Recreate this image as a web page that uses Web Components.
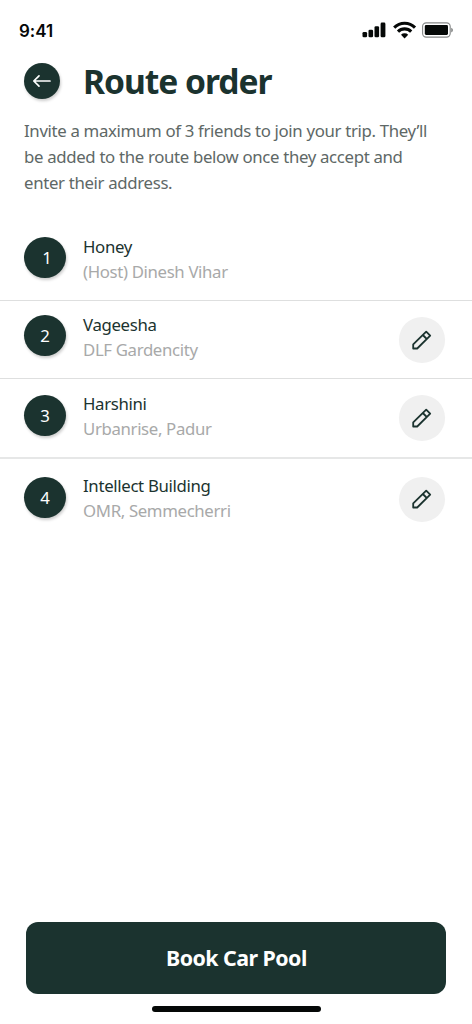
<!DOCTYPE html>
<html lang="en">
<head>
<meta charset="utf-8">
<title>Route order</title>
<style>
html,body{margin:0;height:100%;background:#fff}
body{font-family:"Noto Sans",sans-serif;color:#1b332f;overflow:hidden}
</style>
</head>
<body>
<route-screen></route-screen>
<script>
const define = (name, markup) => customElements.define(name, class extends HTMLElement {
  constructor() {
    super();
    const t = document.createElement('template');
    t.innerHTML = markup;
    this.attachShadow({mode: 'open'}).append(t.content.cloneNode(true));
  }
});

define('status-bar', `<style>
:host{display:flex;height:62px;box-sizing:border-box;padding:20px 19px 0 19px;justify-content:space-between;align-items:flex-start;color:#050807}
time{font:600 17px/21px Inter,sans-serif;letter-spacing:-.05px;margin-top:.6px}
svg{display:block;margin-top:1px}
</style>
<time>9:41</time>
<svg width="92" height="20" viewBox="361 21 92 20" fill="#050807">
<rect x="362.5" y="32" width="4.6" height="5.3" rx="1.3"/><rect x="368.5" y="29.8" width="4.6" height="7.5" rx="1.3"/><rect x="374.5" y="26.2" width="4.6" height="11.1" rx="1.3"/><rect x="380.6" y="22.6" width="4.8" height="14.7" rx="1.3"/>
<g fill="none" stroke="#050807" stroke-width="3.1"><path d="M394.2 27.6a14.7 14.7 0 0 1 20.8 0"/><path d="M398 31.6a9.3 9.3 0 0 1 13.2 0"/></g>
<path d="M401 34.7a5.2 5.2 0 0 1 7.2 0L404.6 38.4z"/>
<rect x="422.6" y="22.9" width="27.6" height="14.2" rx="3.6" fill="none" stroke="#858787" stroke-width="1.1"/>
<rect x="424.8" y="25.1" width="23.2" height="9.8" rx="1.3"/>
<path d="M451.2 27.8q1.8.7 1.8 2.3t-1.8 2.3z" fill="#858787"/>
</svg>`);

define('back-button', `<style>
:host{display:grid;place-items:center;width:36px;height:36px;border-radius:50%;background:#1b332f;box-shadow:1px 2px 3px #0003;margin-top:.5px}
svg{display:block}
</style>
<svg width="36" height="36" viewBox="0 0 36 36" fill="none" stroke="#fff" stroke-width="1.7" stroke-linecap="round" stroke-linejoin="round"><path d="M26 18H10M15 12.8L9.8 18L15 23.2"/></svg>`);

define('page-header', `<style>
:host{display:block;padding:0 24px}
.top{display:flex;gap:23px;align-items:flex-start;height:37px}
h1{margin:0;font-size:33.6px;line-height:38px;font-weight:700;letter-spacing:-1.02px;white-space:nowrap}
p{margin:19px 0 0;font-size:16.8px;line-height:25.9px;color:#5e6866;letter-spacing:-.33px;white-space:nowrap}
</style>
<div class="top"><back-button></back-button><h1><slot></slot></h1></div>
<p><slot name="intro"></slot></p>`);

define('stop-number', `<style>
:host{display:flex;justify-content:center;width:42px;height:41.2px;margin-top:.5px;border-radius:50%;background:#1b332f;color:#fff;box-shadow:1px 2px 3px #0003;font-size:16.8px;line-height:41px}
</style><span><slot></slot></span>`);

define('edit-button', `<style>
:host{display:grid;place-items:center;width:46.5px;height:45.5px;border-radius:50%;background:#f0f0f0}
svg{display:block}
</style>
<svg width="22" height="22" viewBox="0 0 22 22" fill="none" stroke="#1b332f" stroke-width="1.8" stroke-linejoin="round"><path d="M2.2 19.5V15.4L15.2 2.6L19.2 6.6L6.2 19.5zM11.8 6L15.8 10"/></svg>`);

define('route-stop', `<style>
:host{display:grid;grid-template-columns:42px 1fr 46.5px;column-gap:17px;align-items:start;box-sizing:border-box;padding:0 27px 0 24px}
.text{font-size:16.8px;line-height:25px;white-space:nowrap;margin-top:-3px}
.name{letter-spacing:-.33px}
.place{color:#a8a9a9;letter-spacing:-.35px}
.edit{margin-top:var(--edit-top,1px)}
</style>
<stop-number><slot name="number"></slot></stop-number>
<div class="text"><div class="name"><slot></slot></div><div class="place"><slot name="place"></slot></div></div>
<div class="edit"><slot name="action"></slot></div>`);

define('book-button', `<style>
:host{display:flex;justify-content:center;align-items:center;height:72px;border-radius:12px;background:#1b332f;color:#fff;font-size:21.4px;font-weight:700}
span{letter-spacing:-.55px;padding-bottom:2px}
</style><span><slot></slot></span>`);

define('home-indicator', `<style>
:host{display:block;width:169px;height:6px;border-radius:3px;background:#050807}
</style>`);

define('route-screen', `<style>
:host{display:flex;flex-direction:column;height:1024px;width:472px;background:#fff}
.list{display:flex;flex-direction:column;margin-top:26px}
route-stop{border-bottom:1.5px solid #dedfdf}
.a{height:79px;padding-top:15px}
.b{height:78px;padding-top:14px;--edit-top:2.3px}
.c{height:80px;padding-top:15.3px;border-bottom-width:2px;border-bottom-color:#e6e7e7;--edit-top:1px}
.d{height:80px;padding-top:17.3px;border:0;--edit-top:.7px}
footer{margin-top:auto;padding:0 25.6px 12px 26.4px;display:flex;flex-direction:column;gap:12px}
home-indicator{align-self:center}
</style>
<status-bar></status-bar>
<page-header>Route order<span slot="intro">Invite a maximum of 3 friends to join your trip. They’ll<br>be added to the route below once they accept and<br>enter their address.</span></page-header>
<div class="list">
<route-stop class="a"><span slot="number" style="position:relative;left:2px">1</span>Honey<span slot="place">(Host) Dinesh Vihar</span></route-stop>
<route-stop class="b"><span slot="number">2</span>Vageesha<span slot="place">DLF Gardencity</span><edit-button slot="action"></edit-button></route-stop>
<route-stop class="c"><span slot="number">3</span>Harshini<span slot="place">Urbanrise, Padur</span><edit-button slot="action"></edit-button></route-stop>
<route-stop class="d"><span slot="number">4</span>Intellect Building<span slot="place">OMR, Semmecherri</span><edit-button slot="action"></edit-button></route-stop>
</div>
<footer><book-button>Book Car Pool</book-button><home-indicator></home-indicator></footer>`);
</script>
</body>
</html>
